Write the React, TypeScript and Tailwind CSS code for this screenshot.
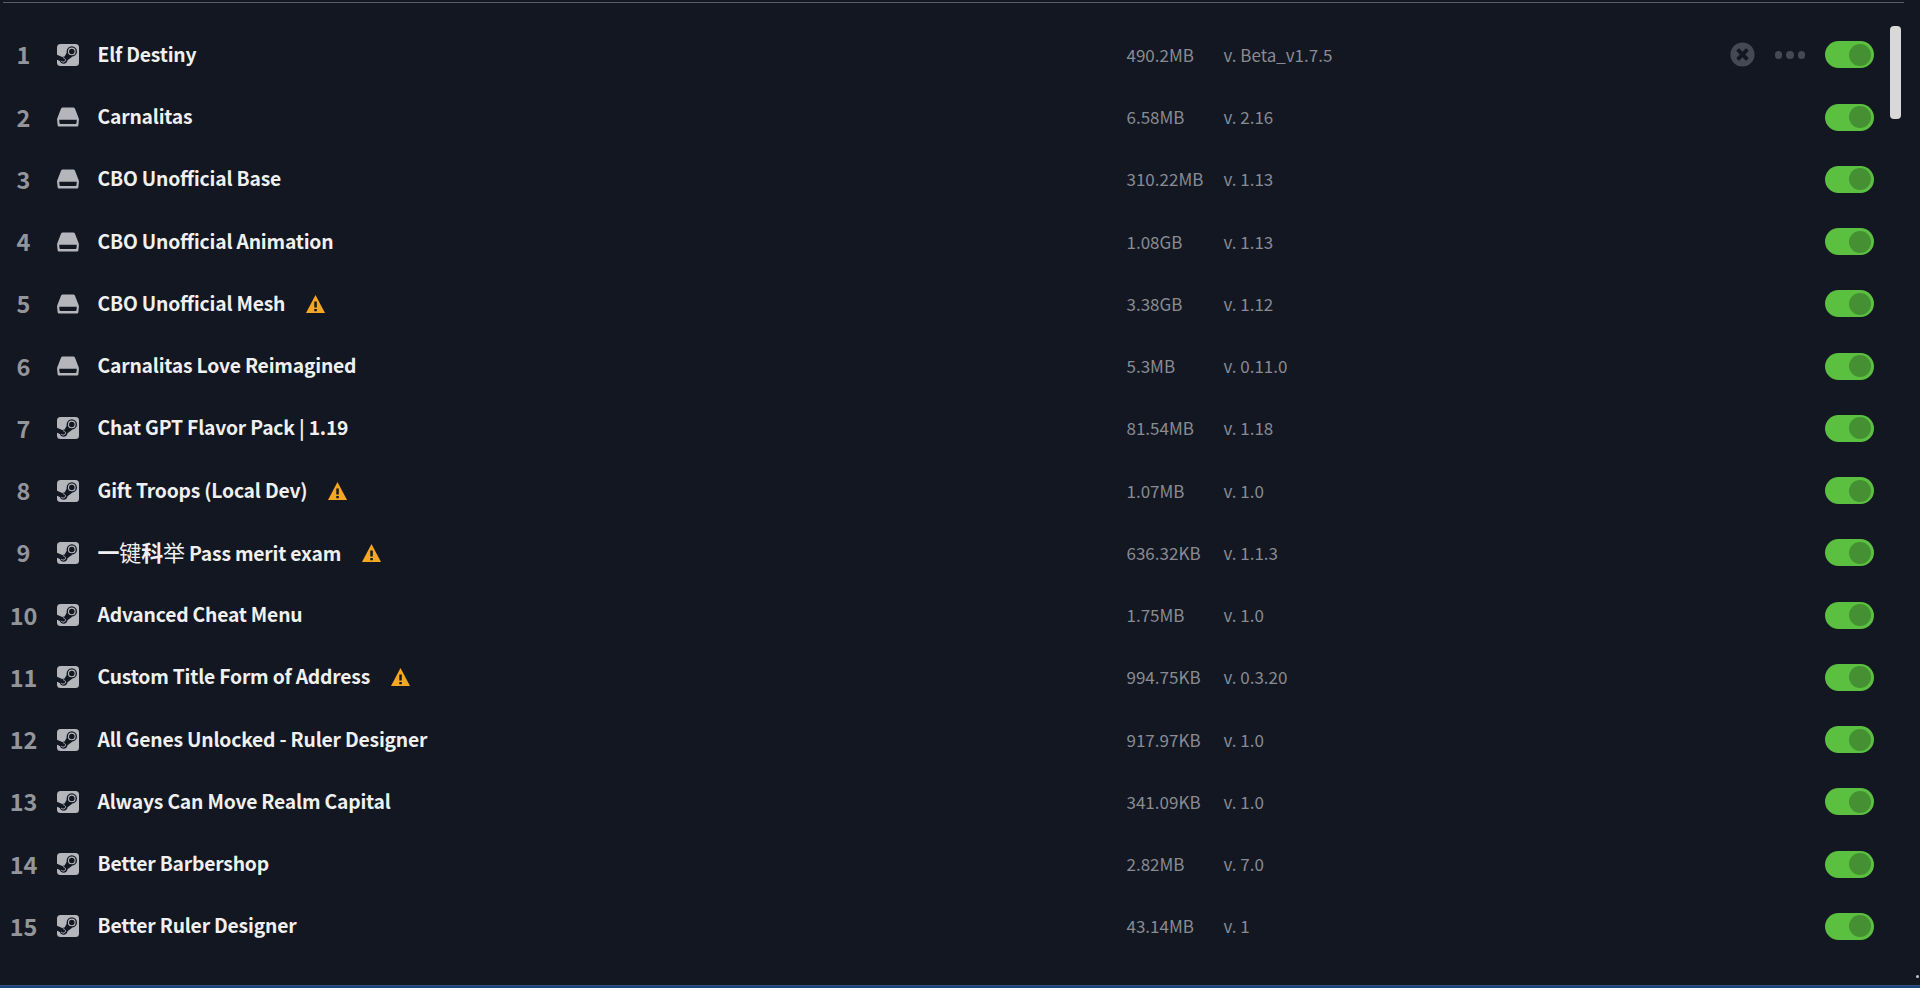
import { FaTimesCircle } from 'react-icons/fa';
import { clsx } from 'clsx';
import type { ReactNode } from 'react';

type ModSource = 'steam' | 'local';

interface Mod {
  name: ReactNode;
  source: ModSource;
  size: string;
  version: string;
  warning?: boolean;
}

const mods: Mod[] = [
  { name: 'Elf Destiny', source: 'steam', size: '490.2MB', version: 'Beta_v1.7.5' },
  { name: 'Carnalitas', source: 'local', size: '6.58MB', version: '2.16' },
  { name: 'CBO Unofficial Base', source: 'local', size: '310.22MB', version: '1.13' },
  { name: 'CBO Unofficial Animation', source: 'local', size: '1.08GB', version: '1.13' },
  { name: 'CBO Unofficial Mesh', source: 'local', size: '3.38GB', version: '1.12', warning: true },
  { name: 'Carnalitas Love Reimagined', source: 'local', size: '5.3MB', version: '0.11.0' },
  { name: 'Chat GPT Flavor Pack | 1.19', source: 'steam', size: '81.54MB', version: '1.18' },
  { name: 'Gift Troops (Local Dev)', source: 'steam', size: '1.07MB', version: '1.0', warning: true },
  {
    name: (
      <>
        <span className="text-[22px]">
          一<span className="font-normal">键</span>科<span className="font-normal">举</span>
        </span>{' '}
        Pass merit exam
      </>
    ),
    source: 'steam',
    size: '636.32KB',
    version: '1.1.3',
    warning: true,
  },
  { name: 'Advanced Cheat Menu', source: 'steam', size: '1.75MB', version: '1.0' },
  { name: 'Custom Title Form of Address', source: 'steam', size: '994.75KB', version: '0.3.20', warning: true },
  { name: 'All Genes Unlocked - Ruler Designer', source: 'steam', size: '917.97KB', version: '1.0' },
  { name: 'Always Can Move Realm Capital', source: 'steam', size: '341.09KB', version: '1.0' },
  { name: 'Better Barbershop', source: 'steam', size: '2.82MB', version: '7.0' },
  { name: 'Better Ruler Designer', source: 'steam', size: '43.14MB', version: '1' },
];

function SteamIcon() {
  return (
    <svg viewBox="0 0 22 22" className="size-[22px]">
      <rect width="22" height="22" rx="3.5" fill="currentColor" />
      <g fill="#131722">
        <circle cx="14.8" cy="7.4" r="5.2" />
        <path d="M0 10.8 5.2 13c.9-.5 1.500-.7 2.400-.6L10 8.200l5.500 4.300-5 3.700c-.2 2.200-1.800 3.600-3.800 3.600-1.900 0-3.300-1.100-3.800-2.800L0 15.800z" />
      </g>
      <g fill="none" stroke="currentColor">
        <circle cx="14.8" cy="7.4" r="3.3" strokeWidth="1.1" />
        <path d="M4.2 17.3l1.4.6a2 2 0 0 0 1.700-3.700l-1.400-.6" strokeWidth="0.9" />
      </g>
    </svg>
  );
}

function DriveIcon() {
  return (
    <svg viewBox="0 0 22 20" className="h-5 w-[22px]" fill="currentColor">
      <path
        fillRule="evenodd"
        d="M5.8.5h10.400c.8 0 1.400.4 1.700 1.100L21.600 11c.3.7.4 1.300.3 2l-.5 4.900c-.1 1-.7 1.600-1.700 1.600H2.300c-1 0-1.600-.6-1.700-1.600L.1 13c-.1-.7 0-1.300.3-2L4.100 1.600C4.400.9 5 .5 5.800.5zM2.200 12.700l.3 3.400c.1.600.4.900 1 .9h15c.6 0 .9-.3 1-.9l.3-3.400z"
      />
    </svg>
  );
}

function WarningIcon() {
  return (
    <svg viewBox="0 0 19 18" className="ml-[21px] h-[18px] w-[19px]">
      <path d="M9.500 0 19 18H0z" fill="#f5a623" />
      <path d="M8.300 6.500h2.500v6H8.300zM8.300 14h2.500v2.200H8.300z" fill="#131722" />
    </svg>
  );
}

function Toggle() {
  return (
    <div className="flex h-[27px] w-[49px] items-center justify-end rounded-full bg-[#5bc040] pr-[3px]">
      <div className="size-[22px] rounded-full bg-[#459033]" />
    </div>
  );
}

function RowActions() {
  return (
    <div className="flex items-center text-[#464854]">
      <FaTimesCircle className="size-[25px]" />
      <div className="ml-5 flex gap-1">
        <span className="size-[7.5px] rounded-full bg-current" />
        <span className="size-[7.5px] rounded-full bg-current" />
        <span className="size-[7.5px] rounded-full bg-current" />
      </div>
    </div>
  );
}

function ModRow({ mod, index, active }: { mod: Mod; index: number; active: boolean }) {
  return (
    <div className="flex h-[62.25px] items-center">
      <div className="w-[47px] pb-px text-center text-[23.5px] leading-6 font-bold text-[#93959b]">{index}</div>
      <div className="ml-2.5 flex w-[22px] shrink-0 justify-center text-[#b5b6bc]">
        {mod.source === 'steam' ? <SteamIcon /> : <DriveIcon />}
      </div>
      <div className="ml-[18.5px] flex w-[1029px] items-center">
        <span className="pb-0.5 text-[19.3px] leading-6 font-bold tracking-[-0.19px] whitespace-pre text-[#f0f0f0] [font-feature-settings:'liga']">
          {mod.name}
        </span>
        {mod.warning && <WarningIcon />}
      </div>
      <div className="w-[97px] text-[17px] leading-6 text-[#898b91]">{mod.size}</div>
      <div className="text-[17px] leading-6 text-[#898b91]">v. {mod.version}</div>
      <div className="ml-auto flex items-center gap-5">
        {active && <RowActions />}
        <Toggle />
      </div>
    </div>
  );
}

export default function App() {
  return (
    <div
      className={clsx(
        'flex h-[988px] w-[1920px] flex-col overflow-hidden bg-[#131722]',
        "font-['Noto_Sans_CJK_SC',sans-serif]"
      )}
    >
      <div className="mt-0.5 ml-[3px] h-px w-[1901px] shrink-0 bg-[#5c5d68]" />
      <div className="flex flex-1 pt-[20.75px]">
        <div className="w-[1874px]">
          {mods.map((mod, i) => (
            <ModRow key={i} mod={mod} index={i + 1} active={i === 0} />
          ))}
        </div>
        {/* Scrollbar */}
        <div className="mt-[2.25px] ml-4 h-[93px] w-[11px] rounded bg-[#d8d8d8]" />
        <div className="mr-px mb-[7px] ml-auto size-[3px] self-end rounded-full bg-[#c4c5c9]" />
      </div>
      <div className="h-[3px] shrink-0 border-t border-[#34557f] bg-[#1d4179]" />
    </div>
  );
}
